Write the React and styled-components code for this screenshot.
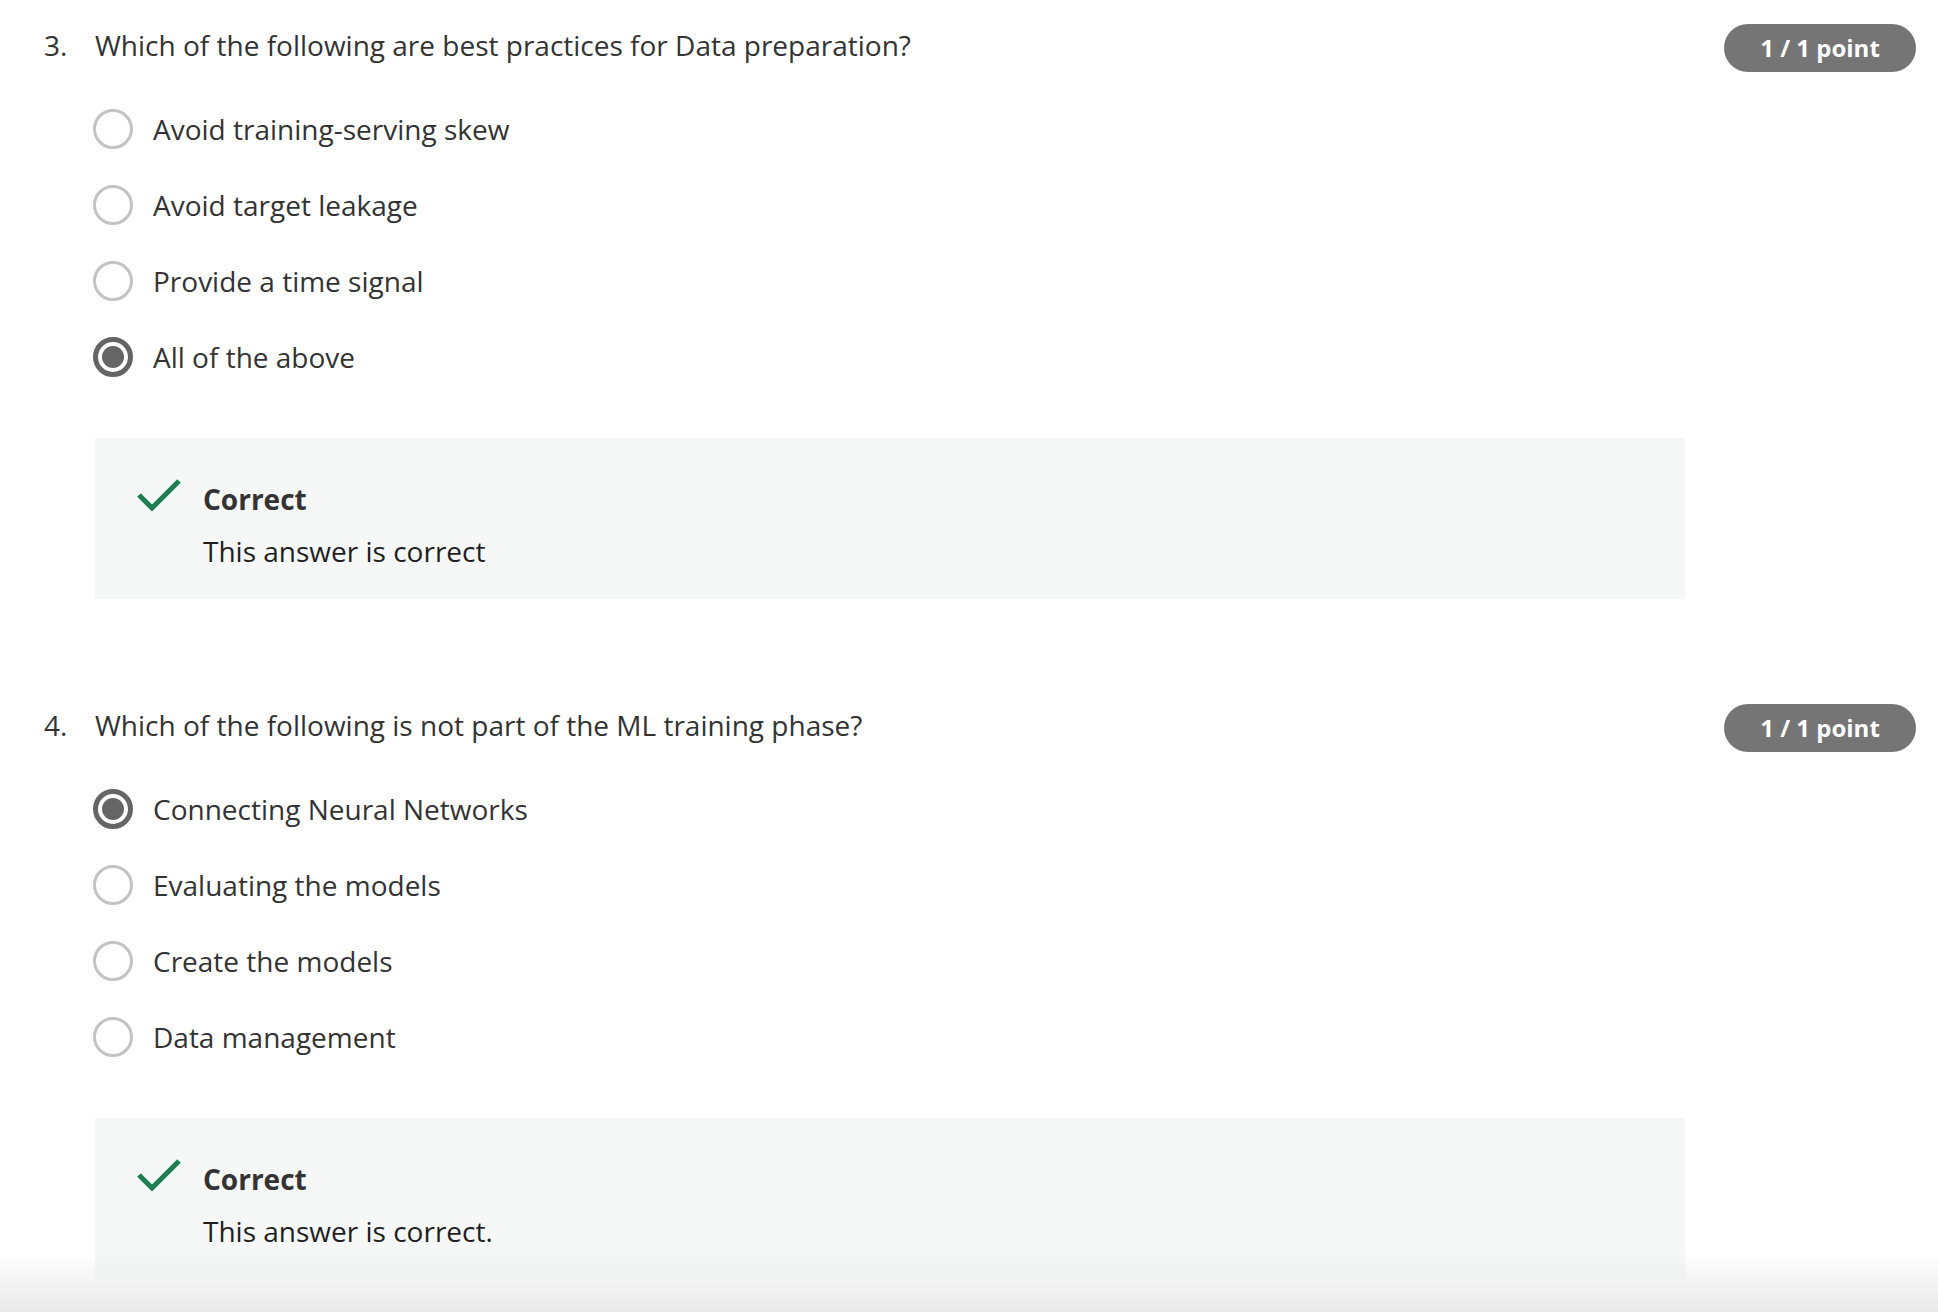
import React from 'react';
import styled, { createGlobalStyle } from 'styled-components';

const GlobalStyle = createGlobalStyle`
  html, body {
    margin: 0;
    padding: 0;
    background: #ffffff;
  }
  body {
    font-family: "Open Sans", "Noto Sans", sans-serif;
    color: #333333;
    -webkit-font-smoothing: antialiased;
  }
`;

const Page = styled.div`
  padding: 0 22px 0 44px;
  min-height: 1312px;
  box-sizing: border-box;
`;

const QuestionBlock = styled.section`
  padding-top: ${(p) => p.$top}px;
`;

const QuestionHeader = styled.div`
  display: flex;
  align-items: center;
  height: 48px;
`;

const Number = styled.span`
  width: 51px;
  flex-shrink: 0;
  font-size: 28px;
  line-height: 40px;
  color: #333;
`;

const Prompt = styled.h3`
  flex: 1;
  margin: 0;
  font-size: 28px;
  font-weight: 400;
  line-height: 40px;
  color: #333;
`;

const Badge = styled.span`
  flex-shrink: 0;
  box-sizing: border-box;
  width: 192px;
  height: 48px;
  border-radius: 24px;
  background: #757575;
  color: #ffffff;
  font-size: 24px;
  font-weight: 700;
  display: flex;
  align-items: center;
  justify-content: center;
  margin-top: 5px;
`;

const OptionList = styled.div`
  display: flex;
  flex-direction: column;
  gap: 36px;
  margin: 40px 0 0 49px;
`;

const Option = styled.label`
  display: flex;
  align-items: center;
  gap: 20px;
  height: 40px;
  font-size: 28px;
  line-height: 40px;
  color: #333;
`;

const Radio = styled.span`
  box-sizing: border-box;
  width: 40px;
  height: 40px;
  border-radius: 50%;
  flex-shrink: 0;
  border: ${(p) => (p.$checked ? '5px solid #656565' : '3.5px solid #c3c3c3')};
  display: flex;
  align-items: center;
  justify-content: center;

  &::after {
    content: '';
    display: ${(p) => (p.$checked ? 'block' : 'none')};
    width: 22px;
    height: 22px;
    border-radius: 50%;
    background: #656565;
  }
`;

const Feedback = styled.div`
  box-sizing: border-box;
  width: 1590px;
  margin: 61px 0 0 51px;
  padding: 43px 0 30px 42px;
  background: #f5f8f7;
  display: flex;
  gap: 24px;
`;

const CheckWrap = styled.div`
  width: 42px;
  margin-top: -2px;
  flex-shrink: 0;
`;

const FeedbackBody = styled.div`
  display: flex;
  flex-direction: column;
  gap: 16px;
`;

const FeedbackTitle = styled.div`
  font-size: 28px;
  font-weight: 700;
  line-height: 36px;
  color: #333;
`;

const FeedbackText = styled.div`
  font-size: 28px;
  line-height: 36px;
  color: #1f1f1f;
`;

const BottomFade = styled.div`
  position: fixed;
  left: 0;
  right: 0;
  bottom: 0;
  height: 60px;
  pointer-events: none;
  background: linear-gradient(to bottom, rgba(232, 232, 232, 0), #e9e9e9);
`;

const CheckIcon = () => (
  <svg width="44" height="34" viewBox="0 0 44 34">
    <path d="M2 16 L15 29 L42 2" fill="none" stroke="#1b7f4f" strokeWidth="5" />
  </svg>
);

const questions = [
  {
    num: '3.',
    top: 21,
    text: 'Which of the following are best practices for Data preparation?',
    options: ['Avoid training-serving skew', 'Avoid target leakage', 'Provide a time signal', 'All of the above'],
    selected: 3,
    feedback: 'This answer is correct',
  },
  {
    num: '4.',
    top: 102,
    text: 'Which of the following is not part of the ML training phase?',
    options: ['Connecting Neural Networks', 'Evaluating the models', 'Create the models', 'Data management'],
    selected: 0,
    feedback: 'This answer is correct.',
  },
];

const App = () => (
  <>
    <GlobalStyle />
    <Page>
      {questions.map((q) => (
        <QuestionBlock key={q.num} $top={q.top}>
          <QuestionHeader>
            <Number>{q.num}</Number>
            <Prompt>{q.text}</Prompt>
            <Badge>1 / 1 point</Badge>
          </QuestionHeader>
          <OptionList>
            {q.options.map((opt, i) => (
              <Option key={opt}>
                <Radio $checked={i === q.selected} />
                {opt}
              </Option>
            ))}
          </OptionList>
          <Feedback>
            <CheckWrap>
              <CheckIcon />
            </CheckWrap>
            <FeedbackBody>
              <FeedbackTitle>Correct</FeedbackTitle>
              <FeedbackText>{q.feedback}</FeedbackText>
            </FeedbackBody>
          </Feedback>
        </QuestionBlock>
      ))}
    </Page>
    <BottomFade />
  </>
);

export default App;
